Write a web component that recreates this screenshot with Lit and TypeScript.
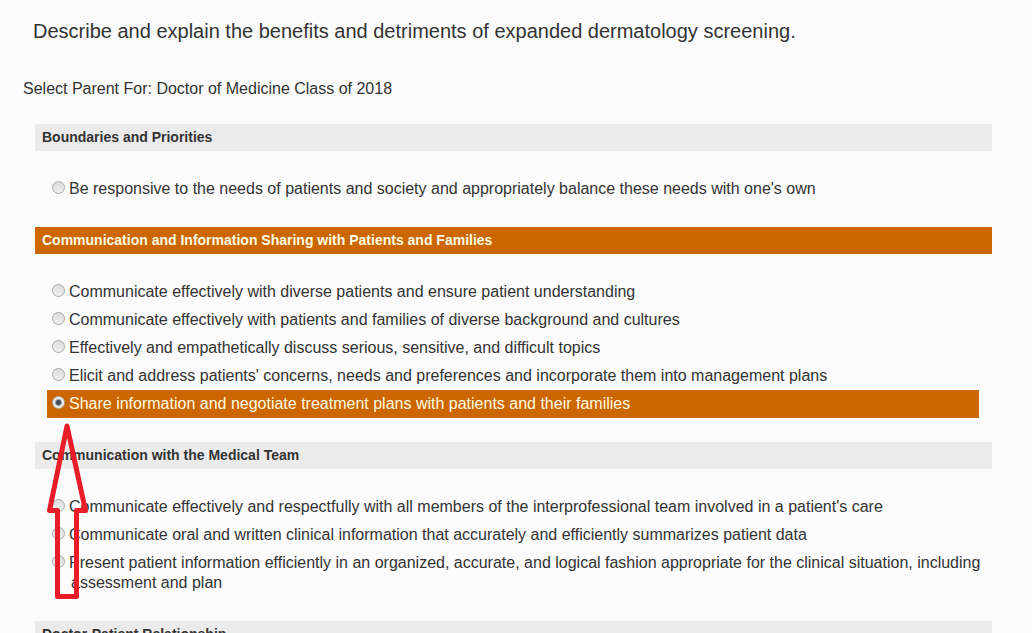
import { LitElement, html, css, svg, nothing } from "lit";
import { customElement, state } from "lit/decorators.js";
import { classMap } from "lit/directives/class-map.js";

interface Group {
  title: string;
  options: string[];
}

const GROUPS: Group[] = [
  {
    title: "Boundaries and Priorities",
    options: [
      "Be responsive to the needs of patients and society and appropriately balance these needs with one's own",
    ],
  },
  {
    title: "Communication and Information Sharing with Patients and Families",
    options: [
      "Communicate effectively with diverse patients and ensure patient understanding",
      "Communicate effectively with patients and families of diverse background and cultures",
      "Effectively and empathetically discuss serious, sensitive, and difficult topics",
      "Elicit and address patients' concerns, needs and preferences and incorporate them into management plans",
      "Share information and negotiate treatment plans with patients and their families",
    ],
  },
  {
    title: "Communication with the Medical Team",
    options: [
      "Communicate effectively and respectfully with all members of the interprofessional team involved in a patient's care",
      "Communicate oral and written clinical information that accurately and efficiently summarizes patient data",
      "Present patient information efficiently in an organized, accurate, and logical fashion appropriate for the clinical situation, including assessment and plan",
    ],
  },
  { title: "Doctor-Patient Relationship", options: [] },
];

@customElement("app-root")
export class AppRoot extends LitElement {
  static styles = css`
    :host {
      display: block;
      box-sizing: border-box;
      height: 100vh;
      overflow-y: auto;
      scrollbar-width: none;
      padding: 20px 40px 0 23px;
      background: #fbfbfb;
      color: #333;
      font-family: "Liberation Sans", Arial, Helvetica, sans-serif;
      font-size: 16px;
      line-height: 20px;
    }
    .title {
      margin: 0 0 37px;
      padding-left: 10px;
      font-size: 20px;
      font-weight: 400;
      line-height: 22px;
    }
    .subtitle {
      margin: 0;
    }
    .groups {
      display: flex;
      flex-direction: column;
      gap: 24px;
      padding: 25px 0 24px 12px;
    }
    .group-title {
      margin: 0;
      padding: 3px 7px 4px;
      background: #ecebeb;
      font-size: 14px;
      font-weight: 700;
      line-height: 20px;
    }
    .group-title.active,
    .option.active {
      background: #cb6600;
      color: #fffbe0;
    }
    .options {
      margin: 24px 13px 0 12px;
    }
    .option {
      position: relative;
      display: flex;
      gap: 4px;
      padding: 4px 0 4px 5px;
    }
    .radio {
      appearance: none;
      flex: none;
      box-sizing: border-box;
      width: 13px;
      height: 13px;
      margin: 2px 0 0;
      border: 1px solid #a9a9a9;
      border-radius: 50%;
      background: linear-gradient(#dcdcdc, #efefef);
    }
    .radio:checked {
      border-color: #b8b0a6;
      background: radial-gradient(circle, #444c5a 0 2px, #e9eaec 4px);
    }
    .label {
      margin-right: -13px;
      padding-left: 2px;
      text-indent: -2px;
    }
    .arrow {
      position: absolute;
      z-index: 1;
      top: 100%;
      left: 0;
      pointer-events: none;
    }
  `;

  @state() private selected = "1-4";

  private renderOption(text: string, id: string) {
    const active = id === this.selected;
    return html`
      <div class=${classMap({ option: true, active })}>
        <input
          class="radio"
          type="radio"
          name="parent"
          id="o${id}"
          .checked=${active}
          @change=${() => (this.selected = id)}
        />
        <label class="label" for="o${id}">${text}</label>
        ${active
          ? html`<svg class="arrow" width="42" height="184" viewBox="0 0 42 184" aria-hidden="true">
              ${svg`<path d="M20 8 L2.5 92.5 H10.5 V178.500 H29.500 V92.5 H38.500 Z" fill="none" stroke="#e91c27" stroke-width="5" stroke-linejoin="round"/>`}
            </svg>`
          : nothing}
      </div>
    `;
  }

  render() {
    return html`
      <h1 class="title">
        Describe and explain the benefits and detriments of expanded dermatology screening.
      </h1>
      <p class="subtitle">Select Parent For: Doctor of Medicine Class of 2018</p>
      <div class="groups">
        ${GROUPS.map(
          (group, g) => html`
            <section>
              <h2 class=${classMap({ "group-title": true, active: this.selected.startsWith(g + "-") })}>
                ${group.title}
              </h2>
              ${group.options.length
                ? html`<div class="options">
                    ${group.options.map((text, o) => this.renderOption(text, `${g}-${o}`))}
                  </div>`
                : nothing}
            </section>
          `
        )}
      </div>
    `;
  }
}
